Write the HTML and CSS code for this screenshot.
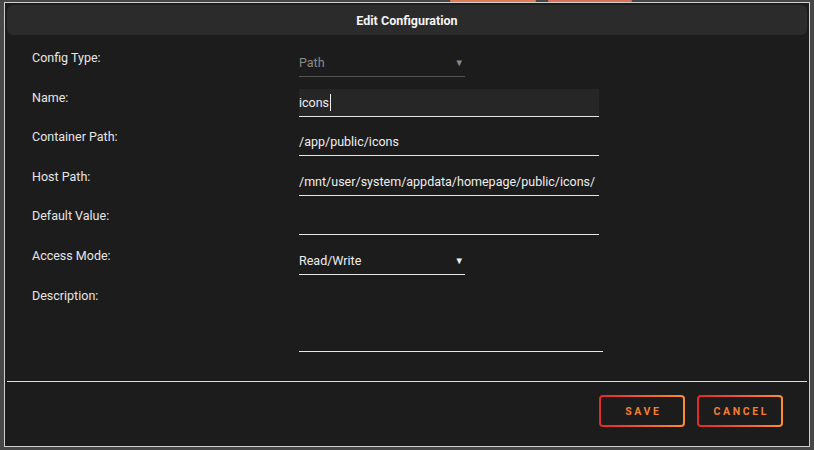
FILE: index.html
```html
<!DOCTYPE html>
<html lang="en-US">

<head>
    <meta charset="UTF-8">
    <meta name="viewport" content="width=device-width, initial-scale=1">
    <title>Edit Configuration</title>
    <link rel="stylesheet" href="styles.css">
</head>

<body>
    <div class="backdrop-blob blob-left"></div>
    <div class="backdrop-blob blob-right"></div>

    <div class="dialog">
        <div class="dialog-header">
            <h1>Edit Configuration</h1>
        </div>

        <div class="form">
            <div class="row">
                <label class="label">Config Type:</label>
                <div class="select disabled">
                    <span>Path</span>
                    <span class="caret">&#9660;</span>
                </div>
            </div>
            <div class="row">
                <label class="label">Name:</label>
                <div class="field focused">icons<span class="cursor"></span></div>
            </div>
            <div class="row">
                <label class="label">Container Path:</label>
                <div class="field">/app/public/icons</div>
            </div>
            <div class="row">
                <label class="label">Host Path:</label>
                <div class="field">/mnt/user/system/appdata/homepage/public/icons/</div>
            </div>
            <div class="row">
                <label class="label">Default Value:</label>
                <div class="field"></div>
            </div>
            <div class="row">
                <label class="label">Access Mode:</label>
                <div class="select">
                    <span>Read/Write</span>
                    <span class="caret">&#9660;</span>
                </div>
            </div>
            <div class="row">
                <label class="label">Description:</label>
                <div class="textarea"></div>
            </div>
        </div>

        <div class="dialog-footer">
            <button class="btn">SAVE</button>
            <button class="btn">CANCEL</button>
        </div>
    </div>
</body>

</html>
```

FILE: styles.css
```css
body,
html {
    margin: 0;
    height: 100%;
}

body {
    background: #474747;
    font-family: Roboto, "Liberation Sans", sans-serif;
    font-size: 12.5px;
    color: #e8e8e8;
    padding-top: 2px;
    box-sizing: border-box;
}

.backdrop-blob {
    position: absolute;
    top: 0;
    height: 3px;
    background: #e07b56;
    border-radius: 0 0 12px 12px;
}

.blob-left {
    left: 450px;
    width: 86px;
}

.blob-right {
    left: 548px;
    width: 84px;
    background: #d9715a;
}

.dialog {
    position: relative;
    margin: 0 4px;
    height: 445px;
    box-sizing: border-box;
    border: 1px solid #cfcfcf;
    background: #1c1c1c;
    padding: 2px;
    display: flex;
    flex-direction: column;
}

.dialog-header {
    height: 30px;
    background: #2b2b2b;
    border-radius: 6px;
    display: flex;
    align-items: center;
    justify-content: center;
}

.dialog-header h1 {
    margin: 0;
    font-size: 12.5px;
    font-weight: bold;
    color: #f4f4f4;
}

.form {
    padding: 14px 0 0 25px;
    display: flex;
    flex-direction: column;
    gap: 11.6px;
}

.row {
    display: grid;
    grid-template-columns: 267px auto;
    align-items: start;
}

.label {
    line-height: 18px;
    color: #e6e6e6;
}

.field,
.select {
    height: 27px;
    line-height: 27px;
    border-bottom: 1px solid #e6e6e6;
    color: #eeeeee;
    white-space: nowrap;
}

.field {
    width: 300px;
}

.field.focused {
    background: #262626;
}

.cursor {
    display: inline-block;
    width: 1px;
    height: 17px;
    background: #f0f0f0;
    vertical-align: -4px;
    margin-left: 1px;
}

.select {
    width: 166px;
    display: flex;
    justify-content: space-between;
}

.select .caret {
    font-size: 9.5px;
    padding-right: 1px;
}

.select.disabled {
    color: #8a8a8a;
    border-bottom-color: #555555;
}

.textarea {
    width: 304px;
    height: 64px;
    border-bottom: 1px solid #e6e6e6;
}

.dialog-footer {
    margin-top: auto;
    border-top: 1px solid #dddddd;
    padding: 13px 24px 17px 0;
    display: flex;
    justify-content: flex-end;
    gap: 12px;
}

.btn {
    width: 86px;
    height: 32px;
    border: 2px solid transparent;
    border-radius: 4px;
    background: linear-gradient(#1c1c1c, #1c1c1c) padding-box,
        linear-gradient(90deg, #e22828, #ff8c2f) border-box;
    color: #f47d32;
    font-family: inherit;
    font-size: 10.5px;
    font-weight: bold;
    letter-spacing: 2.6px;
    padding: 0 0 0 2.6px;
}

button:hover {
    cursor: pointer;
}
```
